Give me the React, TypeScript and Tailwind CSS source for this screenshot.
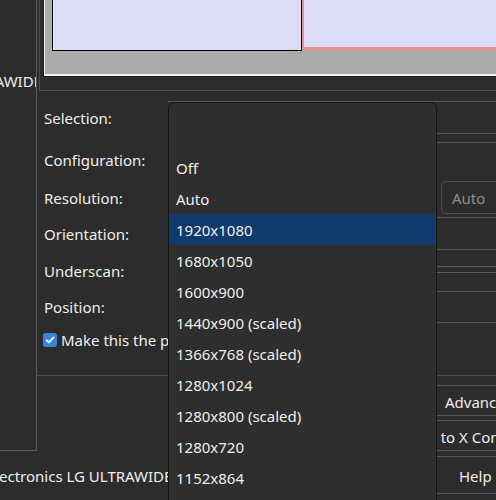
const resolutions = [
  'Off',
  'Auto',
  '1920x1080',
  '1680x1050',
  '1600x900',
  '1440x900 (scaled)',
  '1366x768 (scaled)',
  '1280x1024',
  '1280x800 (scaled)',
  '1280x720',
  '1152x864',
  '1024x768',
];
const selected = '1920x1080';

function Label({ children }: { children: React.ReactNode }) {
  return <div className="w-[131px] shrink-0 pl-[7px] flex items-center whitespace-nowrap">{children}</div>;
}

export default function App() {
  return (
    <div className="relative w-[496px] h-[500px] overflow-hidden flex bg-[#2c2c2c] text-[15px] leading-[20px] text-[#eeeeec] font-['Noto_Sans',sans-serif]">
      {/* display list */}
      <div className="w-[37px] shrink-0 flex flex-col">
        <div className="h-[451px] border-r border-b border-[#5a5a5a] overflow-hidden">
          <div className="mt-[71px] flex justify-end whitespace-nowrap">
            <span className="mr-[-6px]">LG ULTRAWIDE</span>
          </div>
        </div>
        <div className="mt-[15px] ml-[-1px] whitespace-nowrap">ectronics LG ULTRAWIDE</div>
      </div>

      {/* main */}
      <div className="flex-1 flex flex-col min-w-0">
        {/* layout preview */}
        <div className="ml-[2px] h-[91px] border-l border-b border-[#4e4e4e] pl-[3px]">
          <div className="h-[77px] border-l border-b border-[#1e1e1e]">
            <div className="h-[76px] border-l border-b-2 border-[#f2f2f2] bg-[#ababab] pl-[7px] flex items-start">
              <div className="w-[250px] h-[51px] border-l border-r border-b border-black bg-[#dcdcf6]" />
              <div className="flex-1 h-[50px] border-l-2 border-b-[3px] border-[#f08c8c] bg-[#dcdcf6]" />
            </div>
          </div>
        </div>

        {/* Selection */}
        <div className="mt-[10px] h-[33px] flex">
          <Label>Selection:</Label>
          <div className="flex-1 border-y border-[#565656] flex items-center">
            <span className="ml-[258px]">0</span>
          </div>
        </div>
        {/* Configuration */}
        <div className="mt-[8px] h-[36px] flex">
          <Label>Configuration:</Label>
          <div className="flex-1 border-t border-[#565656]" />
        </div>
        {/* Resolution */}
        <div className="h-[39px] flex">
          <Label>Resolution:</Label>
          <div className="flex-1 flex items-start">
            <div className="w-[269px] shrink-0" />
            <div className="ml-[4px] mt-[3px] h-[33px] w-[80px] shrink-0 rounded-[5px] border border-[#4d4d4d] pl-[10px] flex items-center text-[#8c8c8c]">
              Auto
            </div>
          </div>
        </div>
        {/* Orientation */}
        <div className="h-[33px] flex">
          <Label>Orientation:</Label>
          <div className="flex-1 border-y border-[#565656]" />
        </div>
        {/* Underscan */}
        <div className="h-[41px] flex">
          <Label>Underscan:</Label>
          <div className="flex-1 pt-[16px]">
            <div className="h-[7px] border-y border-[#5a5a5a]" />
          </div>
        </div>
        {/* Position */}
        <div className="h-[32px] flex">
          <Label>Position:</Label>
          <div className="flex-1 border-y border-[#565656]" />
        </div>
        {/* primary checkbox */}
        <div className="h-[34px] pl-[6px] flex items-center gap-[4px] whitespace-nowrap">
          <span className="w-[14px] h-[14px] shrink-0 rounded-[3px] bg-[#3584e4] flex items-center justify-center">
            <svg viewBox="0 0 14 14" className="w-[12px] h-[12px]" fill="none" stroke="white" strokeWidth={2.2} strokeLinecap="round" strokeLinejoin="round">
              <path d="M3 7.2l2.6 2.6L11 4.2" />
            </svg>
          </span>
          <span>Make this the primary display for the X screen</span>
        </div>

        <div className="mt-[18px] border-t border-[#4a4a4a]" />

        {/* buttons */}
        <div className="mt-[9px] ml-[131px] h-[31px] border-y border-[#565656] pl-[277px] pt-[2px] flex items-center whitespace-nowrap">
          Advanced...
        </div>
        <div className="mt-[4px] ml-[131px] h-[31px] border-y border-[#565656] pl-[236px] pt-[2px] flex items-center whitespace-nowrap">
          Save to X Configuration File
        </div>
        <div className="mt-[5px] ml-[131px] h-[38px] border-y border-[#565656] pl-[291px] pt-[2px] flex items-center whitespace-nowrap">
          Help
        </div>
      </div>

      {/* open resolution menu */}
      <div className="absolute left-[168px] top-[102px] w-[269px] h-[420px] rounded-t-[6px] border border-[#141414] bg-[#2e2e2e] pt-[49px]">
        {resolutions.map((r) => (
          <div
            key={r}
            className={`h-[31px] pl-[7px] flex items-center whitespace-nowrap ${r === selected ? 'bg-[#103a6c]' : ''}`}
          >
            {r}
          </div>
        ))}
      </div>
    </div>
  );
}
